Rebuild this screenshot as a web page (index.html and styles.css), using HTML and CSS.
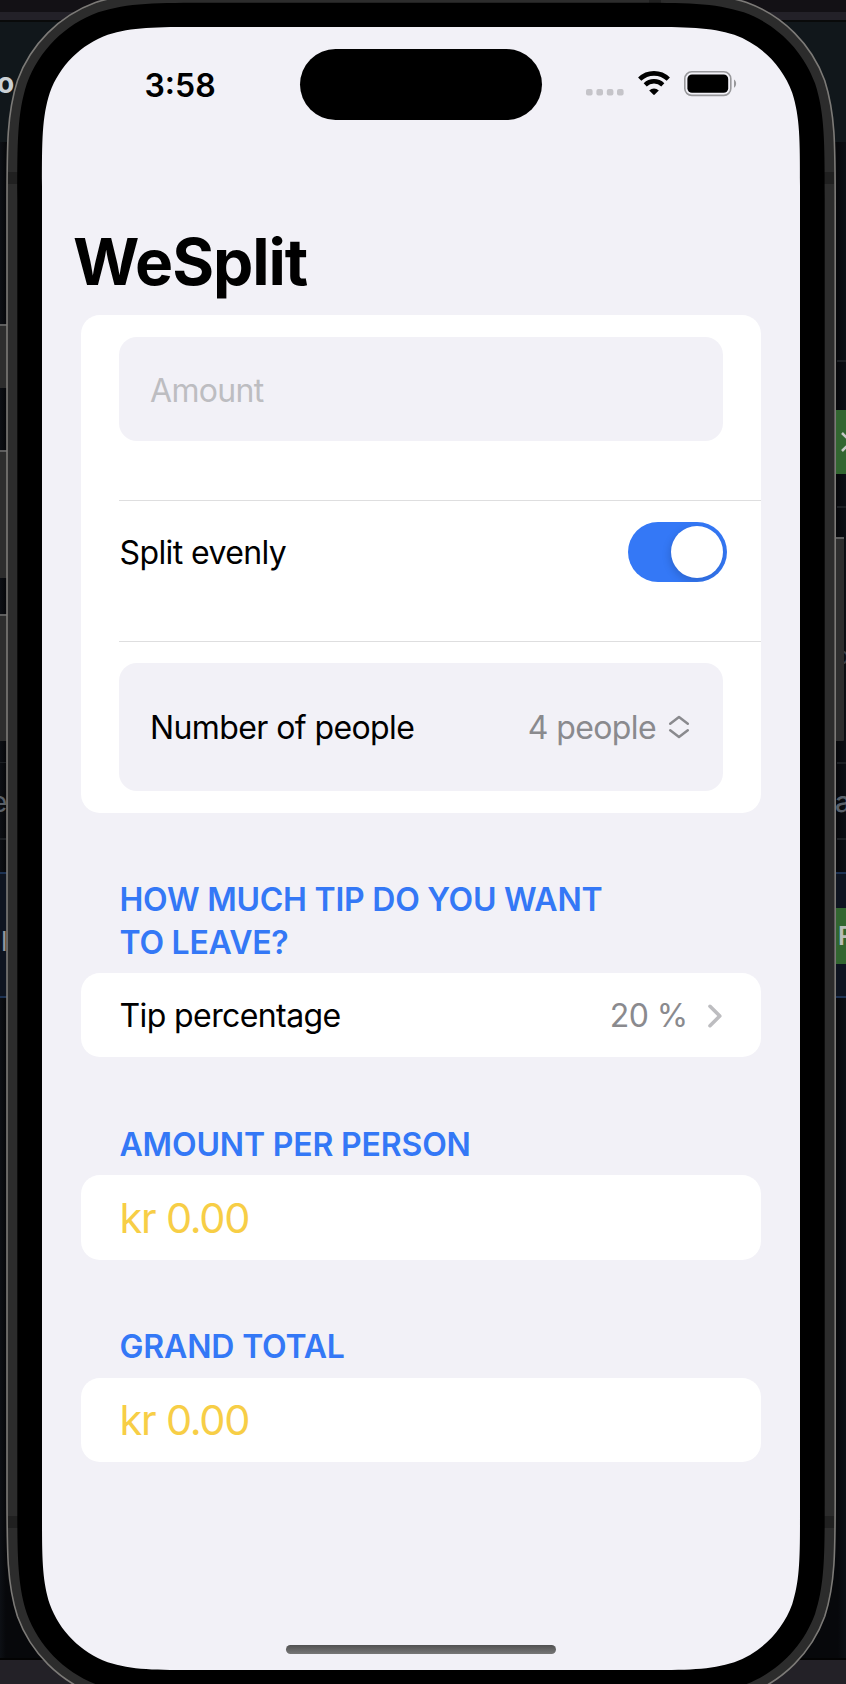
FILE: index.html
```html
<!DOCTYPE html>
<html lang="en">
<head>
<meta charset="utf-8">
<title>WeSplit</title>
<link rel="stylesheet" href="styles.css">
</head>
<body>
<svg class="device" viewBox="0 0 846 1684" width="846" height="1684" aria-hidden="true">
  <!-- window behind the phone -->
  <defs>
    <linearGradient id="edge" x1="0" x2="1"><stop offset="0" stop-color="#0d1015"/><stop offset=".007" stop-color="#07080b"/><stop offset=".99" stop-color="#07080b"/><stop offset="1" stop-color="#0c0f14"/></linearGradient>
  </defs>
  <rect width="846" height="1684" fill="url(#edge)"/>
  <rect width="846" height="12" fill="#131115"/>
  <rect y="12" width="846" height="8" fill="#232128"/>
  <rect y="20" width="846" height="2" fill="#090a0a"/>
  <rect y="22" width="846" height="120" fill="#11171b"/>
  <rect y="1658" width="846" height="2" fill="#030303"/>
  <rect y="1660" width="846" height="24" fill="#232127"/>
  <g fill="#1c1f23">
    <rect y="762" width="6" height="1"/><rect y="838" width="6" height="2"/>
    <rect x="837" y="360" width="9" height="2"/><rect x="837" y="506" width="9" height="2"/>
    <rect x="837" y="762" width="9" height="2"/><rect x="837" y="838" width="9" height="2"/>
  </g>
  <rect y="872" width="846" height="126" fill="#1d3253"/>
  <rect y="874" width="846" height="122" fill="#0e1420"/>
  <rect x="836" y="410" width="10" height="64" fill="#326630"/>
  <rect x="836" y="908" width="10" height="56" fill="#326630"/>
  <path d="M842 433l9 9-9 9" fill="none" stroke="#c5c9c5" stroke-width="2.6"/>
  <g class="behind">
    <text x="-3" y="93" font-size="28" font-weight="700" fill="#ccd1d6">o</text>
    <text x="-9" y="812" font-size="28" fill="#596069">e</text>
    <text x="1" y="951" font-size="27" fill="#92979e">l</text>
    <text x="835" y="664" font-size="24" fill="#3b4047">p</text>
    <text x="835" y="812" font-size="28" font-weight="500" fill="#596069">a</text>
    <text x="838" y="945" font-size="25" font-weight="600" fill="#b9beb9">R</text>
  </g>
  <!-- side buttons -->
  <g fill="#2d2d2d">
    <rect y="325" width="8" height="63"/><rect y="450" width="8" height="128"/><rect y="614" width="8" height="127"/>
    <rect x="834" y="537" width="10" height="204" rx="1"/>
  </g>
  <g fill="#5e5e5e">
    <rect y="324" width="7" height="2"/><rect y="450" width="7" height="2"/><rect y="614" width="7" height="2"/>
    <rect x="836" y="537" width="8" height="2"/>
  </g>
  <!-- casing -->
  <path fill="#2c2c2c" stroke="#7c7a77" stroke-width="1.6" d="M221-8H621.2c61.9 0 92.9 0 125.6 10.5c36.2 13.2 64.7 41.7 77.9 77.9c10.5 32.7 10.5 63.7 10.5 125.6V1491c0 61.9 0 92.9-10.5 125.6c-13.2 36.2-41.7 64.7-77.9 77.9c-32.7 10.5-63.7 10.5-125.6 10.5H221c-61.9 0-92.9 0-125.6-10.5c-36.2-13.2-64.7-41.7-77.9-77.9c-10.5-32.7-10.5-63.7-10.5-125.6V206c0-61.9 0-92.9 10.5-125.6c13.2-36.2 41.7-64.7 77.9-77.9c32.7-10.5 63.7-10.5 125.6-10.5z"/>
  <g fill="#202020">
    <rect x="8" y="172" width="10" height="12"/><rect x="824" y="172" width="10" height="12"/>
    <rect x="8" y="1516" width="10" height="12"/><rect x="824" y="1516" width="10" height="12"/>
    <rect x="649" y="0" width="12" height="4"/>
  </g>
  <path fill="#000" d="M213 2.7H629c56.6 0 84.9 0 114.8 9.6c33.1 12 59.2 38.2 71.3 71.3c9.6 29.9 9.6 58.2 9.6 114.8V1499c0 56.6 0 84.9-9.6 114.8c-12 33.1-38.2 59.2-71.3 71.3c-29.9 9.6-58.2 9.6-114.8 9.6H213c-56.6 0-84.9 0-114.8-9.6c-33.1-12-59.2-38.2-71.3-71.3c-9.6-29.9-9.6-58.2-9.6-114.8V198.4c0-56.6 0-84.9 9.6-114.8c12-33.1 38.2-59.2 71.3-71.3c29.9-9.6 58.2-9.6 114.8-9.6z"/>
  <path fill="#f2f1f7" d="M201 27H641c46 0 69 0 93.3 7.8c26.9 9.8 48.1 31 57.9 57.9c7.8 24.3 7.8 47.3 7.8 93.3V1511c0 46 0 69-7.8 93.3c-9.8 26.9-31 48.1-57.9 57.9c-24.3 7.8-47.3 7.8-93.3 7.8H201c-46 0-69 0-93.3-7.8c-26.9-9.8-48.1-31-57.9-57.9c-7.8-24.3-7.8-47.3-7.8-93.3V186c0-46 0-69 7.8-93.3c9.8-26.9 31-48.1 57.9-57.9c24.3-7.8 47.3-7.8 93.3-7.8z"/>
</svg>

<main class="screen">
  <header class="status">
    <time class="clock">3:58</time>
    <div class="island"></div>
    <div class="indicators">
      <svg class="signal" viewBox="0 0 38 7" width="38" height="7" fill="#c5c4c9"><rect width="6.6" height="6.6" rx="2"/><rect x="10.4" width="6.6" height="6.6" rx="2"/><rect x="20.8" width="6.6" height="6.6" rx="2"/><rect x="31" width="6.6" height="6.6" rx="2"/></svg>
      <svg class="wifi" viewBox="0 0 32 24" width="32" height="24"><path d="M1.7 8.2a20.5 20.5 0 0 1 28.6 0" fill="none" stroke="#000" stroke-width="4.6"/><path d="M7.2 13.900a12.600 12.600 0 0 1 17.600 0" fill="none" stroke="#000" stroke-width="4.4"/><path d="M11.2 19.500a7 7 0 0 1 9.600 0L16 24.200z"/></svg>
      <svg class="battery" viewBox="0 0 53 26" width="53" height="26"><rect x=".8" y=".8" width="46" height="23.600" rx="7" fill="none" stroke="#98989b" stroke-width="1.600"/><rect x="3.400" y="3.400" width="40.800" height="18.400" rx="4.600"/><path d="M50 8.500c2.800 1.300 2.800 6.900 0 8.200z" fill="#98989b"/></svg>
    </div>
  </header>

  <h1 class="title">WeSplit</h1>

  <section class="card form">
    <div class="row row-amount"><div class="field"><span class="placeholder">Amount</span></div></div>
    <div class="row row-toggle"><span class="split-label">Split evenly</span><span class="toggle"><span class="knob"></span></span></div>
    <div class="row row-people">
      <div class="field people">
        <span class="people-label">Number of people</span>
        <span class="picker"><span class="people-value">4 people</span><svg viewBox="0 0 22 24" width="22" height="24" fill="none" stroke="#8a8a8e" stroke-width="2.5" stroke-linecap="round" stroke-linejoin="round"><path d="M2.200 8.700L11 2l8.800 6.700M2.200 15.300l8.800 6.700 8.800-6.700"/></svg></span>
      </div>
    </div>
  </section>

  <h2 class="heading tip-heading"><span class="tip-line">How much tip do you want</span><br><span class="leave-line">to leave?</span></h2>
  <section class="card line">
    <span class="tip-label">Tip percentage</span>
    <span class="link"><span class="tip-value">20 %</span><svg viewBox="0 0 16 26" width="16" height="26" fill="none" stroke="#bdbdc0" stroke-width="3.600" stroke-linecap="round" stroke-linejoin="round"><path d="M3 3.300l9.800 9.700L3 22.700"/></svg></span>
  </section>

  <h2 class="heading person-heading">Amount per person</h2>
  <section class="card line"><span class="money">kr 0.00</span></section>

  <h2 class="heading total-heading">Grand total</h2>
  <section class="card line"><span class="money">kr 0.00</span></section>

  <div class="home"></div>
</main>
</body>
</html>
```
FILE: styles.css
```css
* { box-sizing: border-box; }
body {
  margin: 0;
  height: 1684px;
  overflow: hidden;
  background: #07080b;
  font-family: Inter, "Liberation Sans", sans-serif;
  font-size: 32px;
  color: #000;
}
.device { position: absolute; top: 0; left: 0; }
.behind { font-family: Inter, "Liberation Sans", sans-serif; }
.screen {
  position: relative;
  display: flex;
  flex-direction: column;
  width: 758px;
  height: 1643px;
  margin: 27px 0 0 42px;
  padding: 0 39px;
}
.status {
  display: grid;
  grid-template-columns: 219px 242px 1fr;
  height: 92.500px;
  padding-top: 21.700px;
}
.clock {
  padding-left: 63.500px;
  line-height: 73px;
  font-weight: 600;
}
.island { height: 71px; border-radius: 36px; background: #000; }
.indicators { display: flex; align-items: flex-start; padding-left: 43.700px; }
.signal { margin-top: 40px; }
.wifi { margin: 22.300px 0 0 14px; }
.battery { margin: 22px 0 0 14.300px; }
.title {
  margin: 102.500px 0 0 -8px;
  height: 93px;
  font-size: 64px;
  line-height: 79px;
  font-weight: 700;
  letter-spacing: -1.100px;
}
.card { background: #fff; border-radius: 19px; width: 680px; flex: none; }
.form { height: 497.500px; }
.row { margin-left: 38px; }
.row + .row { border-top: 1px solid #dededf; }
.row-amount { height: 185px; padding-top: 21.700px; }
.row-toggle {
  display: flex;
  justify-content: space-between;
  height: 141px;
  padding: 21px 34px 0 0.500px;
  line-height: 62px;
}
.row-people { height: 171.500px; padding-top: 20.700px; }
.field {
  display: flex;
  align-items: center;
  justify-content: space-between;
  width: 604px;
  height: 104px;
  padding: 3px 33.500px 0 31px;
  border-radius: 18px;
  background: #f2f1f7;
}
.people { height: 128.300px; padding-top: 2px; }
.placeholder { color: #bdbdc1; letter-spacing: -0.700px; }
.split-label { letter-spacing: -0.600px; }
.people-label { letter-spacing: -0.600px; }
.people-value { letter-spacing: -0.600px; }
.tip-label { letter-spacing: -0.600px; }
.tip-value { letter-spacing: -0.600px; }
.toggle {
  display: flex;
  justify-content: flex-end;
  width: 99px;
  height: 60px;
  padding: 4px;
  border-radius: 30px;
  background: #3478f6;
  overflow: hidden;
}
.knob {
  width: 52px;
  height: 52px;
  border-radius: 26px;
  background: #fff;
  box-shadow: -1px 3px 8px rgba(0, 0, 0, .16);
}
.picker, .link { display: flex; align-items: center; color: #8a8a8e; }
.picker svg { margin: -2px 0 0 11.500px; }
.link svg { margin-left: 19.500px; }
.heading {
  margin: 66.500px 0 0 38.500px;
  padding-bottom: 9px;
  font-size: 32px;
  line-height: 42.500px;
  font-weight: 600;
  color: #3478f6;
  text-transform: uppercase;
  white-space: nowrap;
}
.tip-heading { height: 94px; letter-spacing: -0.240px; }
.person-heading, .total-heading { height: 51.500px; letter-spacing: -0.160px; }
.line {
  display: flex;
  align-items: center;
  justify-content: space-between;
  height: 84.300px;
  padding: 0 38px 0 38.500px;
}
.tip-label, .link { margin-top: 1px; }
.money { margin-top: 1px; color: #f7ce46; font-size: 41.500px; letter-spacing: -1.350px; word-spacing: 0.500px; }
.home {
  width: 270px;
  height: 9.500px;
  margin: 183px auto 0;
  border-radius: 5px;
  background: linear-gradient(#515151, #777);
}
```
